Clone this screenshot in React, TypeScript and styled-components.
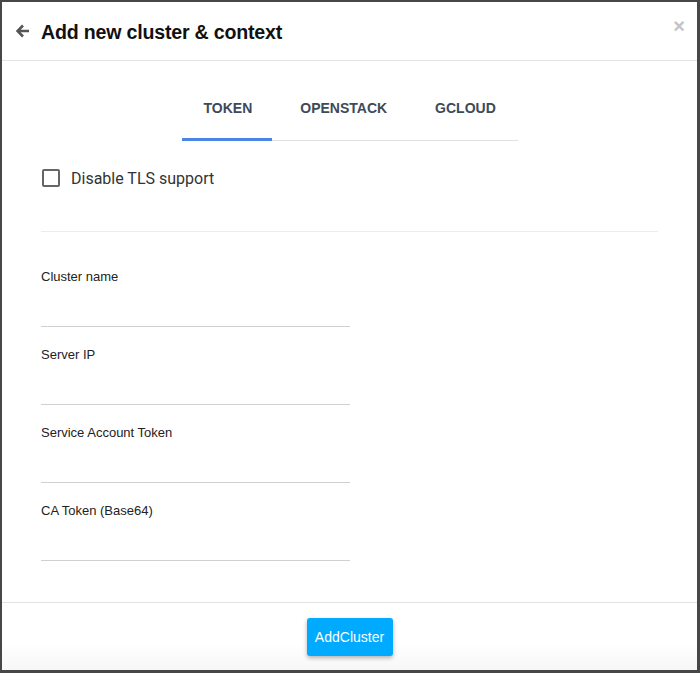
import React from "react";
import styled, { createGlobalStyle } from "styled-components";

const Global = createGlobalStyle`
  html, body { margin: 0; padding: 0; background: #454545; }
  body { font-family: "Liberation Sans", Arial, sans-serif; }
  * { box-sizing: border-box; }
`;

const Backdrop = styled.div`
  width: 700px;
  height: 673px;
  padding: 2px 3px 3px 2px;
  background: #474747;
`;

const Modal = styled.div`
  width: 100%;
  height: 100%;
  background: #fff;
  display: flex;
  flex-direction: column;
`;

const Header = styled.div`
  height: 59px;
  border-bottom: 1px solid #e3e3e3;
  display: flex;
  align-items: center;
  padding: 2px 14px 0 14px;
`;

const BackButton = styled.span`
  width: 25px;
  display: flex;
  align-items: center;
  color: #555;
  margin-top: -3px;
`;

const Title = styled.h2`
  margin: 0;
  font-size: 19.6px;
  font-weight: bold;
  color: #111;
  flex: 1;
  letter-spacing: -0.2px;
`;

const Close = styled.span`
  color: #c4c4c4;
  font-size: 20px;
  font-weight: bold;
  line-height: 1;
  margin-top: -12px;
  margin-right: -2px;
`;

const Body = styled.div`
  flex: 1;
  padding: 19px 39px 0 39px;
  display: flex;
  flex-direction: column;
`;

const Tabs = styled.div`
  align-self: center;
  width: 336px;
  display: flex;
  border-bottom: 1px solid #e0e0e0;
`;

const Tab = styled.div<{ $active?: boolean }>`
  height: 61px;
  padding: 0 20px 2px 22px;
  margin-right: 6px;
  display: flex;
  align-items: center;
  justify-content: center;
  font-size: 14px;
  font-weight: bold;
  color: #3c4a5a;
  border-bottom: 3px solid ${(p) => (p.$active ? "#4a86e8" : "transparent")};
  margin-bottom: -1px;
`;

const CheckRow = styled.label`
  display: flex;
  align-items: center;
  margin-top: 27px;
  padding-left: 1px;
  height: 20px;
  font-family: Roboto, "Liberation Sans", sans-serif;
  font-size: 16px;
  color: #333;
`;

const Box = styled.span`
  width: 18px;
  height: 18px;
  border: 2px solid #666;
  border-radius: 2px;
  margin-right: 11px;
`;

const Divider = styled.div`
  height: 1px;
  background: #ececec;
  margin-top: 43px;
`;

const Fields = styled.div`
  display: flex;
  flex-direction: column;
  padding-top: 37px;
`;

const Field = styled.div`
  width: 309px;
  height: 78px;
  display: flex;
  flex-direction: column;
`;

const Label = styled.div`
  font-size: 13px;
  color: #222;
  line-height: 15px;
`;

const Input = styled.div`
  margin-top: 42px;
  height: 0;
  border-bottom: 1px solid #d0d0d0;
  flex: 0 0 auto;
`;

const Footer = styled.div`
  height: 68px;
  border-top: 1px solid #e3e3e3;
  display: flex;
  justify-content: center;
  align-items: flex-start;
  padding-top: 15px;
  background: linear-gradient(#fff 60%, #f7f7f7);
`;

const Button = styled.button`
  width: 86px;
  height: 38px;
  background: #00aaff;
  color: #fff;
  border: none;
  border-radius: 3px;
  font-family: "Liberation Sans", Arial, sans-serif;
  font-size: 14px;
  box-shadow: 0 2px 4px rgba(0, 0, 0, 0.3);
  padding: 0;
`;

const fields = ["Cluster name", "Server IP", "Service Account Token", "CA Token (Base64)"];

export default function App() {
  return (
    <>
      <Global />
      <Backdrop>
        <Modal>
          <Header>
            <BackButton>
              <svg width="14" height="14" viewBox="0 0 14 14">
                <path d="M7 1.5 L1.5 7 L7 12.5 M1.8 7 H13" stroke="#555" strokeWidth="2.6" fill="none" strokeLinejoin="miter" />
              </svg>
            </BackButton>
            <Title>Add new cluster &amp; context</Title>
            <Close>×</Close>
          </Header>
          <Body>
            <Tabs>
              <Tab $active>TOKEN</Tab>
              <Tab>OPENSTACK</Tab>
              <Tab>GCLOUD</Tab>
            </Tabs>
            <CheckRow>
              <Box />
              Disable TLS support
            </CheckRow>
            <Divider />
            <Fields>
              {fields.map((f) => (
                <Field key={f}>
                  <Label>{f}</Label>
                  <Input />
                </Field>
              ))}
            </Fields>
          </Body>
          <Footer>
            <Button>AddCluster</Button>
          </Footer>
        </Modal>
      </Backdrop>
    </>
  );
}
